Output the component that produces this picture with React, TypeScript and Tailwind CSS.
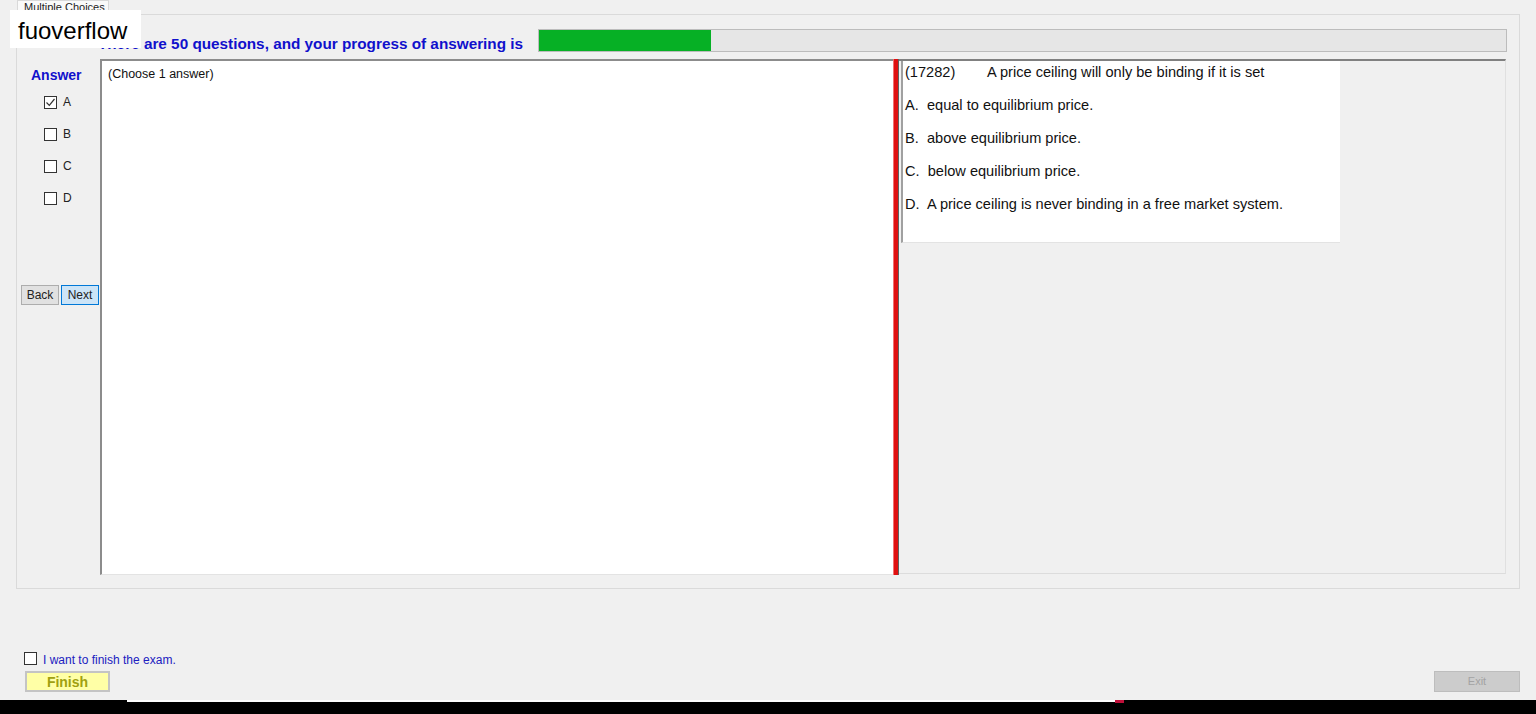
import React from "react";

const font = "font-['Liberation_Sans',Arial,sans-serif]";

function Box({ checked = false }: { checked?: boolean }) {
  return (
    <span className="w-[13px] h-[13px] border border-[#333333] bg-white flex items-center justify-center shrink-0">
      {checked && (
        <svg width="11" height="11" viewBox="0 0 11 11">
          <polyline points="1.5,5.5 4.3,8.3 9.5,2" fill="none" stroke="#333333" strokeWidth="1.2" />
        </svg>
      )}
    </span>
  );
}

const options = ["A", "B", "C", "D"];

const choices = [
  "A.  equal to equilibrium price.",
  "B.  above equilibrium price.",
  "C.  below equilibrium price.",
  "D.  A price ceiling is never binding in a free market system.",
];

export default function App() {
  const progress = 172 / 968;
  return (
    <div className={`relative h-[714px] w-[1536px] overflow-hidden bg-[#f0f0f0] flex flex-col ${font}`}>
      {/* tab strip */}
      <div className="h-[14px] pl-[17px] flex items-end">
        <div className="h-[14px] w-[92px] border border-b-0 border-[#d9d9d9] bg-[#fafafa] text-[11px] leading-[12px] text-[#222] pl-[6px] overflow-hidden whitespace-nowrap">
          Multiple Choices
        </div>
      </div>

      {/* tab page */}
      <div className="ml-[16px] w-[1504px] h-[575px] border border-[#dadada] flex flex-col">
        {/* header with progress */}
        <div className="mt-[14px] h-[23px] flex items-end">
          <div className="pl-[81px] w-[505px] text-[15.3px] leading-[17px] font-bold text-[#1010cc] whitespace-nowrap pb-[0px]">
            There are 50 questions, and your progress of answering is
          </div>
          <div className="ml-[16px] w-[969px] h-[23px] border border-[#bcbcbc] bg-[#e6e6e6] flex">
            <div className="h-full bg-[#06b025]" style={{ width: `${progress * 100}%` }} />
          </div>
        </div>

        {/* body */}
        <div className="mt-[7px] h-[516px] flex">
          {/* answer column */}
          <div className="w-[83px] flex flex-col">
            <div className="pl-[14px] pt-[8px] text-[14px] leading-[16px] font-bold text-[#1010cc]">Answer</div>
            <div className="mt-[13px] flex flex-col gap-[19px] pl-[27px]">
              {options.map((o, i) => (
                <div key={o} className="flex items-center gap-[6px] h-[13px]">
                  <Box checked={i === 0} />
                  <span className="text-[12px] leading-[13px] text-[#222]">{o}</span>
                </div>
              ))}
            </div>
            <div className="mt-[80px] pl-[4px] flex gap-[2px]">
              <button className="w-[38px] h-[20px] border border-[#adadad] bg-[#e1e1e1] text-[12px] text-[#222] leading-[18px]">
                Back
              </button>
              <button className="w-[38px] h-[20px] border border-[#0078d7] bg-[#cce4f7] text-[12px] text-[#222] leading-[18px]">
                Next
              </button>
            </div>
          </div>

          {/* answer note box */}
          <div className="w-[793px] h-full bg-white border-l-2 border-t-2 border-[#8c8c8c] border-b border-b-[#e3e3e3] pl-[6px] pt-[5px]">
            <div className="text-[12.5px] leading-[16px] text-[#111]">(Choose 1 answer)</div>
          </div>

          {/* splitter */}
          <div className="w-[6px] h-full flex">
            <div className="w-[5px] h-full bg-[#e01010] border-l border-[#f07070]" />
            <div className="w-[1px] h-full bg-[#606060]" />
          </div>

          {/* question panel */}
          <div className="w-[607px] h-[515px] border-t-2 border-[#808080] border-r border-r-[#e0e0e0] border-b border-b-[#dcdcdc] pl-[2px] bg-[#f0f0f0]">
            <div className="w-[439px] h-[182px] bg-white border-l-2 border-[#a0a0a0] border-b border-b-[#e3e3e3] pl-[2px] text-[14.6px] leading-[16px] text-[#111]">
              <div className="pt-[3px] flex whitespace-pre">
                <span className="w-[82px]">(17282)</span>
                <span>A price ceiling will only be binding if it is set</span>
              </div>
              <div className="mt-[17px] flex flex-col gap-[17px]">
                {choices.map((c) => (
                  <div key={c} className="whitespace-pre">{c}</div>
                ))}
              </div>
            </div>
          </div>
        </div>
      </div>

      {/* footer controls */}
      <div className="flex-1 flex items-end justify-between pb-[8px]">
        <div className="pl-[24px] flex flex-col gap-[5px]">
          <div className="flex items-center gap-[6px] h-[16px]">
            <Box />
            <span className="text-[12px] leading-[14px] text-[#2020c0] mt-[3px]">I want to finish the exam.</span>
          </div>
          <button className="ml-[1px] w-[85px] h-[21px] border-2 border-[#c4c4c4] bg-[#ffffa6] text-[14px] leading-[16px] font-bold text-[#a0a010]">
            Finish
          </button>
        </div>
        <button className="mr-[16px] w-[86px] h-[21px] border border-[#bdbdbd] bg-[#cccccc] text-[11px] text-[#a3a3a3]">
          Exit
        </button>
      </div>

      {/* bottom strip */}
      <div className="h-[14px] bg-black flex items-start">
        <div className="w-[127px]" />
        <div className="w-[988px] h-[2px] bg-white" />
        <div className="w-[9px] h-[3px] bg-[#c0103a]" />
      </div>

      {/* watermark */}
      <div className="absolute left-[10px] top-[10px] w-[131px] h-[38px] bg-white pl-[8px] text-[24px] leading-[42px] text-black">
        fuoverflow
      </div>
    </div>
  );
}
